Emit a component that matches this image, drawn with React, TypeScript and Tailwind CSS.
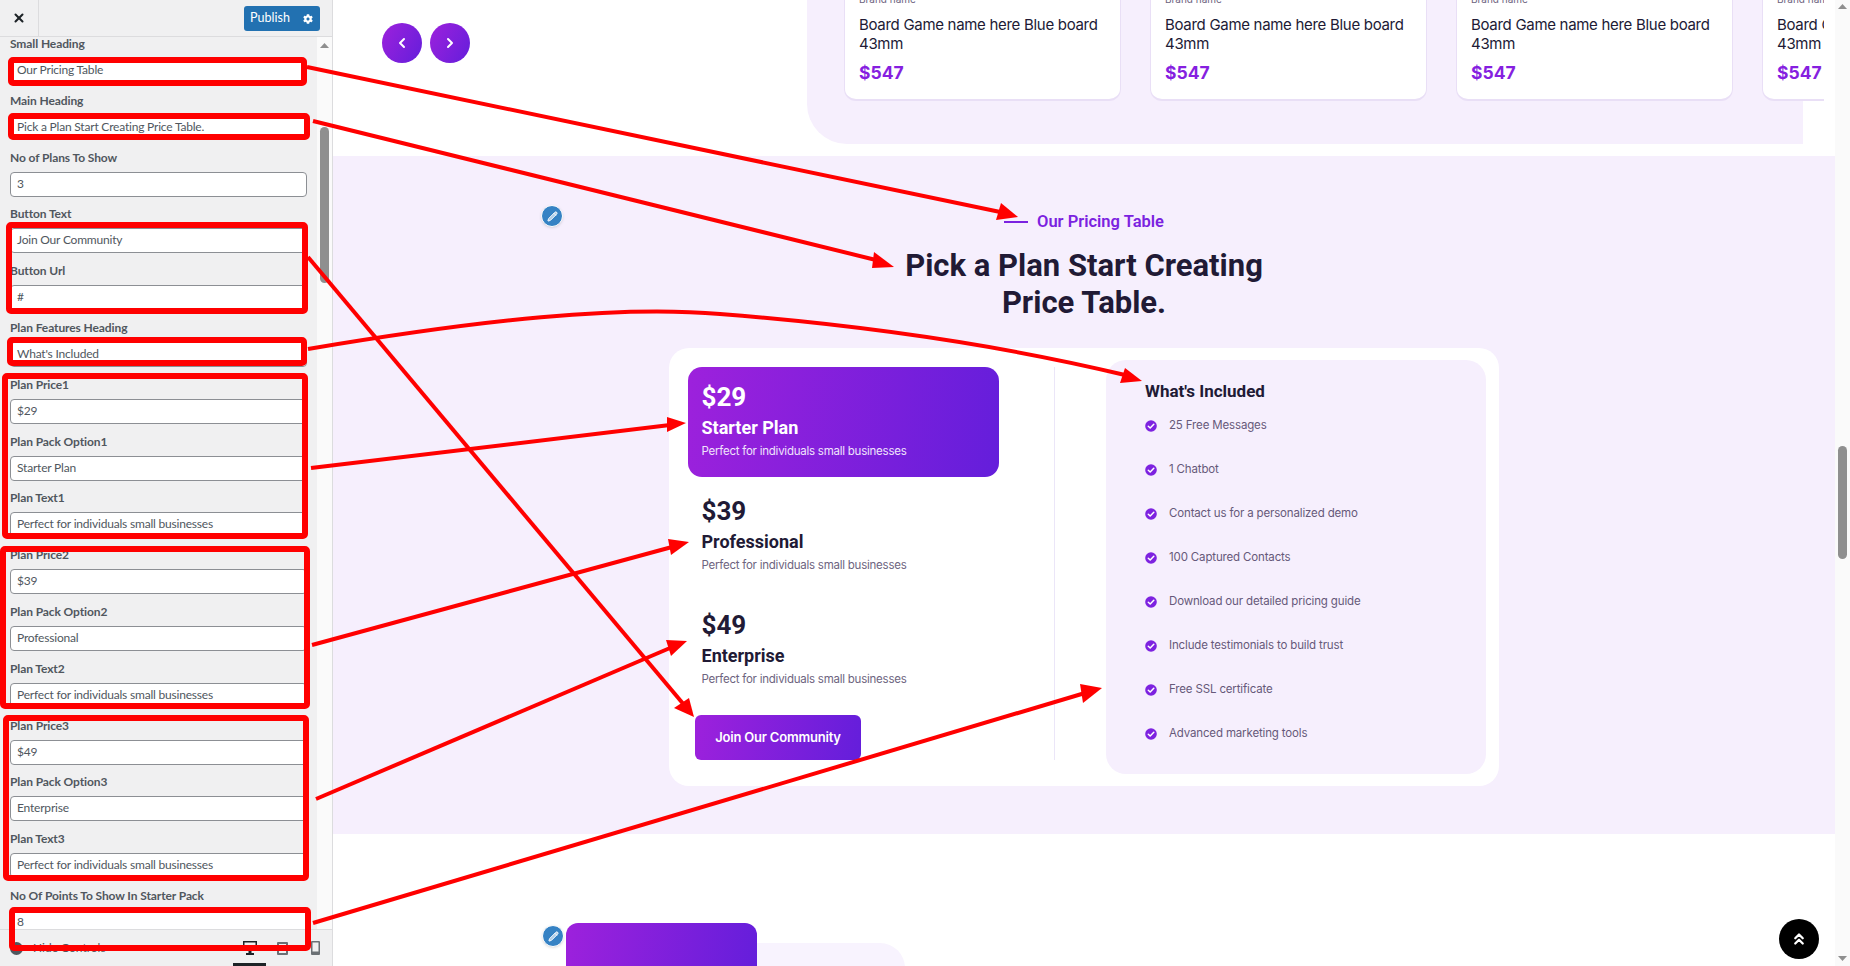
import React from "react";
import { X, ChevronLeft, ChevronRight, ChevronsUp, Pencil } from "lucide-react";
import { FaCog } from "react-icons/fa";

const FIELDS = [
  ["Small Heading", "Our Pricing Table"],
  ["Main Heading", "Pick a Plan Start Creating Price Table."],
  ["No of Plans To Show", "3"],
  ["Button Text", "Join Our Community"],
  ["Button Url", "#"],
  ["Plan Features Heading", "What's Included"],
  ["Plan Price1", "$29"],
  ["Plan Pack Option1", "Starter Plan"],
  ["Plan Text1", "Perfect for individuals small businesses"],
  ["Plan Price2", "$39"],
  ["Plan Pack Option2", "Professional"],
  ["Plan Text2", "Perfect for individuals small businesses"],
  ["Plan Price3", "$49"],
  ["Plan Pack Option3", "Enterprise"],
  ["Plan Text3", "Perfect for individuals small businesses"],
  ["No Of Points To Show In Starter Pack", "8"],
];

const PLANS = [
  { price: "$29", name: "Starter Plan", active: true },
  { price: "$39", name: "Professional", active: false },
  { price: "$49", name: "Enterprise", active: false },
];

const POINTS = [
  "25 Free Messages",
  "1 Chatbot",
  "Contact us for a personalized demo",
  "100 Captured Contacts",
  "Download our detailed pricing guide",
  "Include testimonials to build trust",
  "Free SSL certificate",
  "Advanced marketing tools",
];

function Field({ label, value }: { label: string; value: string }) {
  return (
    <div className="h-[56.8px] pl-[10px] shrink-0">
      <div className="h-[20px] leading-[20px] text-[12px] tracking-[-0.1px] font-bold text-[#50575e] whitespace-nowrap">{label}</div>
      <div className="mt-[4px] w-[297px] h-[25px] leading-[22px] pl-[6px] text-[12px] tracking-[-0.2px] text-[#50575e] bg-white border border-[#8c8f94] rounded-[4px] whitespace-nowrap">
        {value}
      </div>
    </div>
  );
}

function Sidebar() {
  return (
    <aside className="w-[333px] h-full shrink-0 flex flex-col bg-[#f0f0f1] border-r border-[#dcdcde] font-['Lato',sans-serif]">
      <div className="h-[37px] shrink-0 flex items-center border-b border-[#dcdcde]">
        <div className="w-[39px] h-full flex items-center justify-center border-r border-[#dcdcde]">
          <X className="w-[14px] h-[14px] text-[#1d2327]" strokeWidth={3.5} />
        </div>
        <div className="ml-auto mr-[12px] mt-[1px] flex items-center h-[25px] rounded-[3px] bg-[#2271b1] text-white text-[12.500px]">
          <span className="w-[52px] text-center">Publish</span>
          <span className="w-[24px] flex justify-center"><FaCog className="w-[10px] h-[10px]" /></span>
        </div>
      </div>
      <div className="flex-1 min-h-0 flex overflow-hidden">
        <div className="w-[317px] -mt-[3px] flex flex-col">
          {FIELDS.map(([l, v]) => <Field key={l} label={l} value={v} />)}
        </div>
        <div className="relative flex-1 bg-[#fafafa]">
          <svg className="absolute left-[3px] top-[6px]" width="9" height="5" viewBox="0 0 9 5"><polygon points="4.5,0 9,5 0,5" fill="#8f8f8f" /></svg>
          <div className="absolute left-[3px] top-[90px] w-[9px] h-[156px] rounded-full bg-[#8f8f8f]" />
        </div>
      </div>
      <div className="h-[37px] shrink-0 flex items-center pl-[10px] border-t border-[#dcdcde] text-[12px] text-[#50575e]">
        <span className="w-[13px] h-[13px] rounded-full bg-[#50575e]" />
        <span className="ml-[10px]">Hide Controls</span>
        <div className="ml-auto flex h-full">
          <div className="relative w-[33px] flex items-center justify-center">
            <svg width="14" height="14" viewBox="0 0 14 14"><path d="M0 0h14v10H8.500v2H11v2H3v-2h2.500v-2H0zM1.500 1.500v7h11v-7z" fill="#1d2327" /></svg>
            <span className="absolute left-0 right-0 bottom-0 h-[3px] bg-[#1d2327]" />
          </div>
          <div className="w-[33px] flex items-center justify-center">
            <span className="w-[11px] h-[13px] border-2 border-[#6b7075] rounded-[1px]" />
          </div>
          <div className="w-[33px] flex items-center justify-center">
            <svg width="9" height="14" viewBox="0 0 9 14"><path d="M1 0h7a1 1 0 0 1 1 1v12a1 1 0 0 1-1 1H1a1 1 0 0 1-1-1V1a1 1 0 0 1 1-1zM1.500 1.500v9h6v-9z" fill="#6b7075" /></svg>
          </div>
        </div>
      </div>
    </aside>
  );
}

function ProductCard() {
  return (
    <div className="w-[277px] h-[101px] shrink-0 pl-[14px] flex flex-col justify-end pb-[15px] bg-white rounded-b-[12px] border border-t-0 border-[#e9dff6] border-b-2 font-['Inter',sans-serif]">
      <div className="text-[10px] leading-[14px] text-[#6d6480]">Brand name</div>
      <div className="mt-[9px] text-[15px] leading-[19px] tracking-[-0.3px] text-[#211a35] whitespace-nowrap">Board Game name here Blue board</div>
      <div className="text-[15px] leading-[19px] tracking-[-0.3px] text-[#211a35]">43mm</div>
      <div className="mt-[9px] text-[17.500px] leading-[22px] font-bold text-[#861fe0]">$547</div>
    </div>
  );
}

function PlanRow({ price, name, active }: { price: string; name: string; active: boolean }) {
  return (
    <div className={`w-[311px] h-[110px] pl-[13.500px] pt-[12px] rounded-[14px] ${active ? "bg-[linear-gradient(100deg,#9d21dc,#641edb)] text-white" : "text-[#211a35]"}`}>
      <div className="text-[26px] leading-[36px] font-bold font-['Roboto',sans-serif]">{price}</div>
      <div className="mt-[1px] text-[18px] leading-[24px] font-bold font-['Roboto',sans-serif]">{name}</div>
      <div className={`mt-[2px] text-[11.500px] leading-[18px] tracking-[-0.24px] whitespace-nowrap ${active ? "text-[#f0e4fb]" : "text-[#6d6480]"}`}>
        Perfect for individuals small businesses
      </div>
    </div>
  );
}

function CheckDot() {
  return (
    <svg className="shrink-0" width="12" height="12" viewBox="0 0 12 12">
      <circle cx="6" cy="6" r="5.800" fill="#7d22e0" />
      <path d="M3.300 6.200 5.200 8 8.800 4.300" fill="none" stroke="#fff" strokeWidth="1.500" strokeLinecap="round" strokeLinejoin="round" />
    </svg>
  );
}

function PricingCard() {
  return (
    <div className="mt-[27px] w-[830px] h-[438px] flex bg-white rounded-[20px] font-['Inter',sans-serif]">
      <div className="ml-[19px] mt-[19px] w-[367px] h-[393px] border-r border-[#ebe6f8]">
        <div className="flex flex-col gap-[4px]">
          {PLANS.map((p) => <PlanRow key={p.price} {...p} />)}
        </div>
        <div className="ml-[7px] mt-[10px] w-[166px] h-[45px] flex items-center justify-center rounded-[6px] bg-[linear-gradient(100deg,#9d21dc,#641edb)] text-white text-[13px] font-semibold tracking-[-0.2px]">
          Join Our Community
        </div>
      </div>
      <div className="ml-[51px] my-[12px] w-[380px] pl-[39px] pt-[20px] rounded-[20px] bg-[#f6effd]">
        <div className="text-[17px] leading-[22px] font-bold text-[#211a35] font-['Roboto',sans-serif]">What's Included</div>
        <ul className="mt-[2px]">
          {POINTS.map((t) => (
            <li key={t} className="h-[44px] flex items-center gap-[12px] text-[11.500px] tracking-[-0.15px] text-[#66597a]">
              <CheckDot />
              {t}
            </li>
          ))}
        </ul>
      </div>
    </div>
  );
}

function EditDot({ className }: { className: string }) {
  return (
    <div className={`absolute w-[22px] h-[22px] rounded-full bg-[#3582c4] border border-white flex items-center justify-center shadow-sm ${className}`}>
      <Pencil className="w-[11px] h-[11px] text-white" fill="#ffffff" fillOpacity={0.6} strokeWidth={2} />
    </div>
  );
}

function Preview() {
  return (
    <main className="relative flex-1 min-w-0 flex bg-white">
      <div className="w-[1502px] shrink-0 flex flex-col">
        <div className="h-[156px] shrink-0 flex items-start">
          <div className="w-[474px] shrink-0 pl-[49px] pt-[23px] flex gap-[8px]">
            <div className="w-[40px] h-[40px] rounded-full flex items-center justify-center text-white bg-[linear-gradient(120deg,#9d21dc,#641edb)]"><ChevronLeft className="w-[16px] h-[16px]" strokeWidth={3} /></div>
            <div className="w-[40px] h-[40px] rounded-full flex items-center justify-center text-white bg-[linear-gradient(120deg,#9d21dc,#641edb)]"><ChevronRight className="w-[16px] h-[16px]" strokeWidth={3} /></div>
          </div>
          <div className="w-[996px] h-[144px] shrink-0 pl-[37px] flex gap-[29px] bg-[#f6effd] rounded-bl-[40px]">
            <ProductCard />
            <ProductCard />
            <ProductCard />
            <div className="w-[62px] h-[101px] shrink-0 overflow-hidden"><ProductCard /></div>
          </div>
        </div>
        <section className="relative h-[678px] shrink-0 flex flex-col items-center pt-[56px] bg-[#f6effd]">
          <EditDot className="left-[208px] top-[49px]" />
          <div className="h-[20px] flex items-center gap-[9px]">
            <span className="w-[24px] h-[2px] bg-[#7b22e0]" />
            <span className="text-[16.500px] font-semibold text-[#7b22e0] font-['Roboto',sans-serif]">Our Pricing Table</span>
          </div>
          <h2 className="mt-[15px] w-[400px] text-center text-[31px] leading-[37px] font-bold text-[#211a35] font-['Roboto',sans-serif]">
            Pick a Plan Start Creating Price Table.
          </h2>
          <PricingCard />
        </section>
        <div className="relative flex-1 min-h-0 pt-[89px] pl-[233px] flex overflow-hidden">
          <EditDot className="left-[209px] top-[91px]" />
          <div className="w-[191px] h-[60px] shrink-0 rounded-t-[12px] bg-[linear-gradient(100deg,#9d21dc,#641edb)]" />
          <div className="w-[148px] h-[40px] mt-[20px] shrink-0 rounded-tr-[25px] bg-[#f8f3fe]" />
        </div>
      </div>
      <div className="relative flex-1 bg-[#fafafa]">
        <svg className="absolute left-[3px] top-[4px]" width="9" height="5" viewBox="0 0 9 5"><polygon points="4.500,0 9,5 0,5" fill="#8f8f8f" /></svg>
        <div className="absolute left-[3px] top-[446px] w-[9px] h-[113px] rounded-full bg-[#8f8f8f]" />
        <svg className="absolute left-[3px] top-[956px]" width="9" height="5" viewBox="0 0 9 5"><polygon points="0,0 9,0 4.500,5" fill="#8f8f8f" /></svg>
      </div>
      <div className="absolute left-[1446px] top-[919px] w-[40px] h-[40px] rounded-full bg-black flex items-center justify-center">
        <ChevronsUp className="w-[18px] h-[18px] text-white" strokeWidth={3} />
      </div>
    </main>
  );
}

function Annotations() {
  const heads = [
    "1018,217 1001,203 996,220",
    "894,267 874,252 872,268",
    "694,717 674,708 689,698",
    "1142,381 1125,368 1120,383",
    "686,423 667,417 667,432",
    "689,542 668,539 671,555",
    "687,641 666,640 671,656",
    "1102,688 1080,684 1083,703",
  ];
  return (
    <svg className="absolute inset-0 pointer-events-none" width="1850" height="966" viewBox="0 0 1850 966" fill="none" stroke="#ff0000">
      <g strokeWidth="6">
        <rect x="11" y="60" width="293" height="23" rx="2" />
        <rect x="11" y="116" width="296" height="21" rx="2" />
        <rect x="9" y="225" width="296" height="86" rx="2" />
        <rect x="10" y="340" width="294" height="23" rx="2" />
        <rect x="5" y="376" width="300" height="160" rx="2" />
        <rect x="3" y="549" width="304" height="157" rx="2" />
        <rect x="6" y="718" width="300" height="160" rx="2" />
        <rect x="12" y="910" width="296" height="38" rx="2" />
      </g>
      <g strokeWidth="4">
        <path d="M307 67 1005 213" />
        <path d="M313 121 880 261" />
        <path d="M308 257 685 706" />
        <path d="M308 349C480 320 620 305 720 314C860 325 1000 345 1125 375" />
        <path d="M311 468 670 425" />
        <path d="M312 645 672 547" />
        <path d="M316 799 670 648" />
        <path d="M313 923 1085 693" />
      </g>
      <g fill="#ff0000" stroke="none">
        {heads.map((p) => <polygon key={p} points={p} />)}
      </g>
    </svg>
  );
}

export default function App() {
  return (
    <div className="relative w-[1850px] h-[966px] flex overflow-hidden bg-white">
      <Sidebar />
      <Preview />
      <Annotations />
    </div>
  );
}
